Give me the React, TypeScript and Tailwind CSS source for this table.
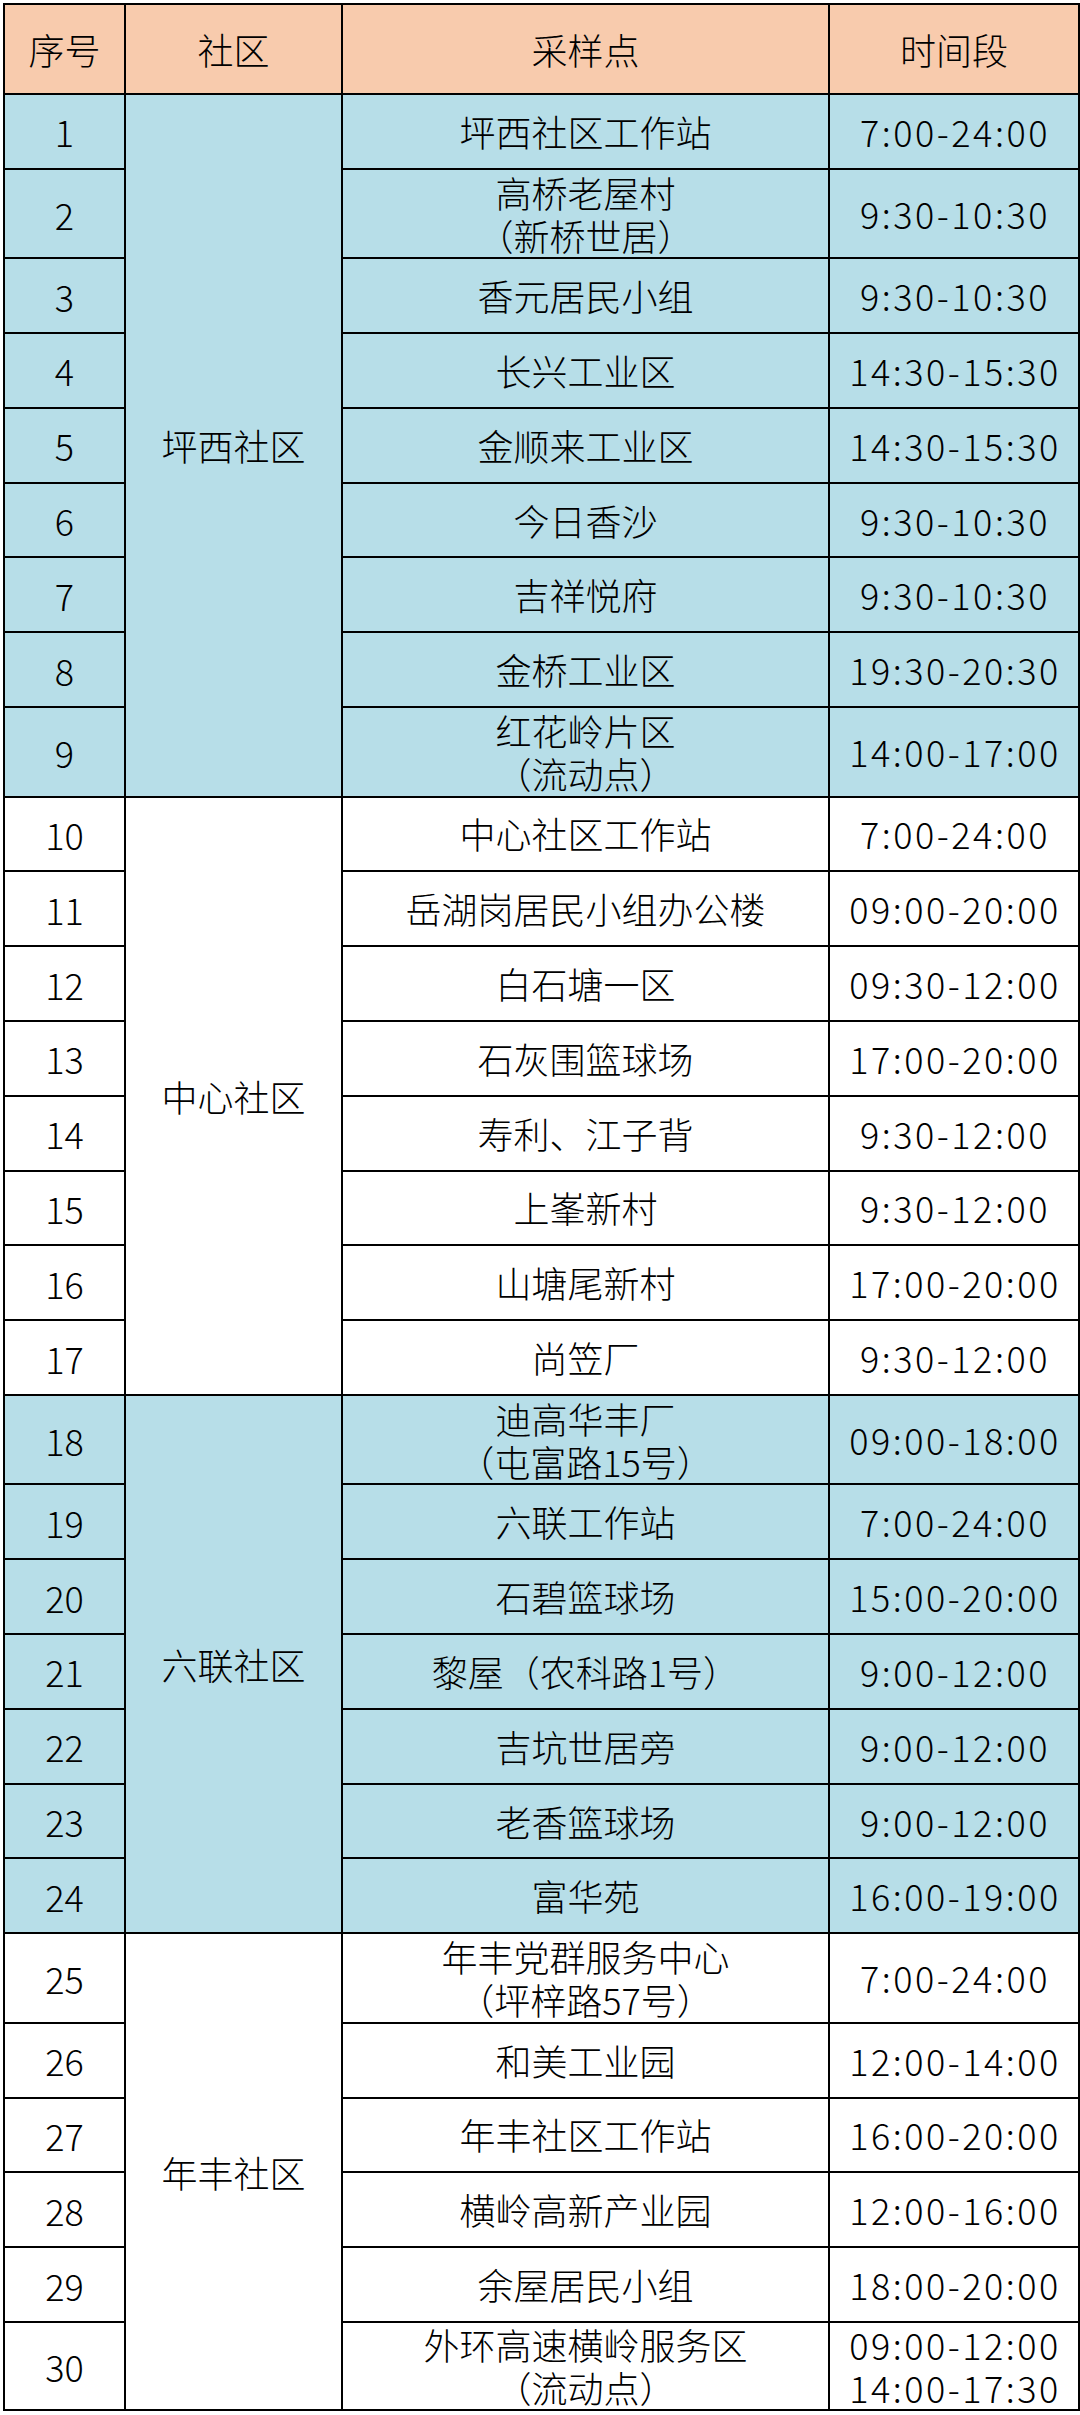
type Row = {
  no: number;
  site: string[];
  time: string[];
  h: string;
};

type Group = {
  name: string;
  bg: string;
  rows: Row[];
};

const S = 'h-[74.8px]';
const D = 'h-[89.5px]';

const groups: Group[] = [
  {
    name: '坪西社区',
    bg: 'bg-[#b7dee8]',
    rows: [
      { no: 1, site: ['坪西社区工作站'], time: ['7:00-24:00'], h: S },
      { no: 2, site: ['高桥老屋村', '（新桥世居）'], time: ['9:30-10:30'], h: D },
      { no: 3, site: ['香元居民小组'], time: ['9:30-10:30'], h: S },
      { no: 4, site: ['长兴工业区'], time: ['14:30-15:30'], h: S },
      { no: 5, site: ['金顺来工业区'], time: ['14:30-15:30'], h: S },
      { no: 6, site: ['今日香沙'], time: ['9:30-10:30'], h: S },
      { no: 7, site: ['吉祥悦府'], time: ['9:30-10:30'], h: S },
      { no: 8, site: ['金桥工业区'], time: ['19:30-20:30'], h: S },
      { no: 9, site: ['红花岭片区', '（流动点）'], time: ['14:00-17:00'], h: D },
    ],
  },
  {
    name: '中心社区',
    bg: 'bg-white',
    rows: [
      { no: 10, site: ['中心社区工作站'], time: ['7:00-24:00'], h: S },
      { no: 11, site: ['岳湖岗居民小组办公楼'], time: ['09:00-20:00'], h: S },
      { no: 12, site: ['白石塘一区'], time: ['09:30-12:00'], h: S },
      { no: 13, site: ['石灰围篮球场'], time: ['17:00-20:00'], h: S },
      { no: 14, site: ['寿利、江子背'], time: ['9:30-12:00'], h: S },
      { no: 15, site: ['上峯新村'], time: ['9:30-12:00'], h: S },
      { no: 16, site: ['山塘尾新村'], time: ['17:00-20:00'], h: S },
      { no: 17, site: ['尚笠厂'], time: ['9:30-12:00'], h: S },
    ],
  },
  {
    name: '六联社区',
    bg: 'bg-[#b7dee8]',
    rows: [
      { no: 18, site: ['迪高华丰厂', '（屯富路15号）'], time: ['09:00-18:00'], h: D },
      { no: 19, site: ['六联工作站'], time: ['7:00-24:00'], h: S },
      { no: 20, site: ['石碧篮球场'], time: ['15:00-20:00'], h: S },
      { no: 21, site: ['黎屋（农科路1号）'], time: ['9:00-12:00'], h: S },
      { no: 22, site: ['吉坑世居旁'], time: ['9:00-12:00'], h: S },
      { no: 23, site: ['老香篮球场'], time: ['9:00-12:00'], h: S },
      { no: 24, site: ['富华苑'], time: ['16:00-19:00'], h: S },
    ],
  },
  {
    name: '年丰社区',
    bg: 'bg-white',
    rows: [
      { no: 25, site: ['年丰党群服务中心', '（坪梓路57号）'], time: ['7:00-24:00'], h: D },
      { no: 26, site: ['和美工业园'], time: ['12:00-14:00'], h: S },
      { no: 27, site: ['年丰社区工作站'], time: ['16:00-20:00'], h: S },
      { no: 28, site: ['横岭高新产业园'], time: ['12:00-16:00'], h: S },
      { no: 29, site: ['余屋居民小组'], time: ['18:00-20:00'], h: S },
      { no: 30, site: ['外环高速横岭服务区', '（流动点）'], time: ['09:00-12:00', '14:00-17:30'], h: 'h-[87px]' },
    ],
  },
];

const cell = 'border-2 border-black p-0 text-center align-middle';

function Lines({ lines, className = '' }: { lines: string[]; className?: string }) {
  return (
    <div className={`flex flex-col items-center leading-[43px] ${className}`}>
      {lines.map((l) => (
        <span key={l} className="whitespace-nowrap">{l}</span>
      ))}
    </div>
  );
}

export default function App() {
  return (
    <div className="min-h-[2415px] w-[1080px] bg-white pt-[3px] pl-[3px]">
      <table
        className="w-[1075px] table-fixed border-collapse text-[36px] font-light text-black"
        style={{ fontFamily: '"Noto Sans CJK SC", "Noto Sans", sans-serif' }}
      >
        <colgroup>
          <col className="w-[121px]" />
          <col className="w-[217px]" />
          <col className="w-[487px]" />
          <col className="w-[250px]" />
        </colgroup>
        <thead>
          <tr className="h-[90px] bg-[#f8cbad]">
            <th className={`${cell} font-light`}>序号</th>
            <th className={`${cell} font-light`}>社区</th>
            <th className={`${cell} font-light`}>采样点</th>
            <th className={`${cell} font-light`}>时间段</th>
          </tr>
        </thead>
        <tbody>
          {groups.map((g) =>
            g.rows.map((r, i) => (
              <tr key={r.no} className={`${r.h} ${g.bg}`}>
                <td className={cell}>{r.no}</td>
                {i === 0 && (
                  <td className={cell} rowSpan={g.rows.length}>
                    {g.name}
                  </td>
                )}
                <td className={cell}>
                  <Lines lines={r.site} />
                </td>
                <td className={cell}>
                  <Lines lines={r.time} className="pl-[2px] tracking-[2.5px]" />
                </td>
              </tr>
            ))
          )}
        </tbody>
      </table>
    </div>
  );
}
